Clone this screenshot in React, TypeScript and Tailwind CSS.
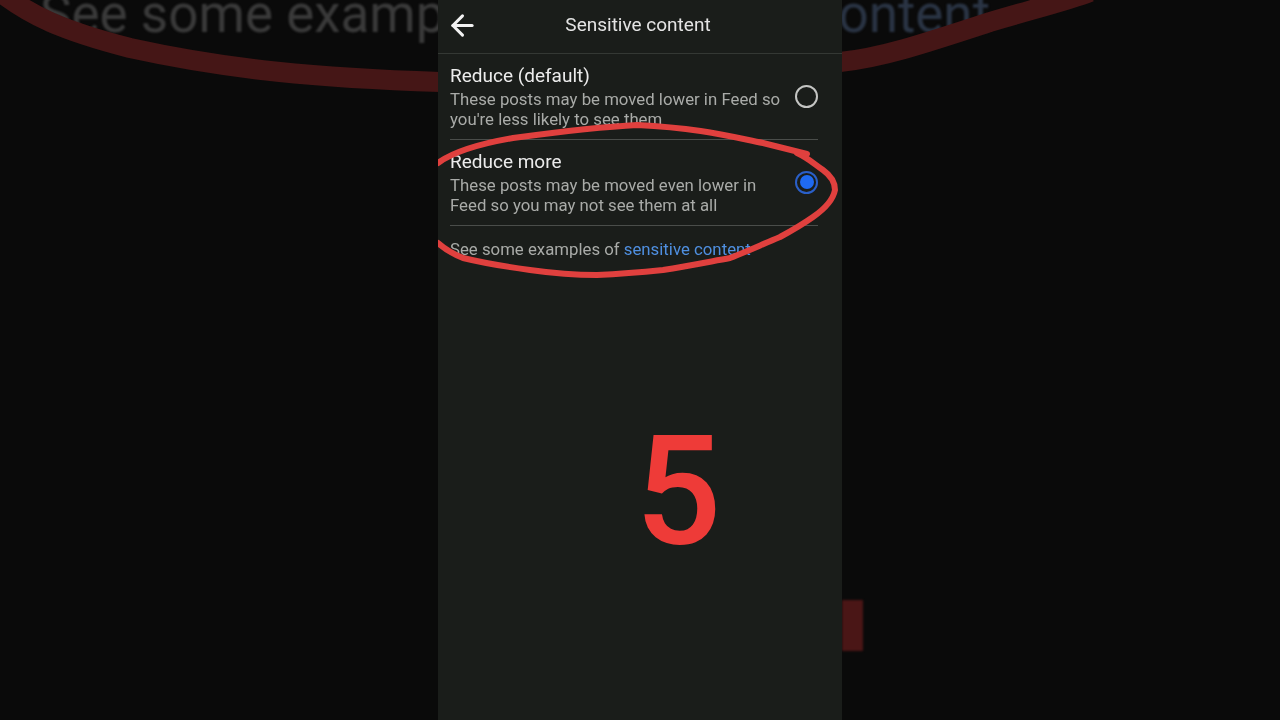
import { ArrowLeft } from "lucide-react";

function Option({ title, lines, selected }: { title: string; lines: string[]; selected?: boolean }) {
  return (
    <div className="flex items-center justify-between h-[86px] border-b border-[#4a4d4a] pb-[1px]">
      <div>
        <div className="text-[19px] leading-[24px] pb-[1px] text-[#ececec]">{title}</div>
        <div className="text-[16.8px] leading-[20px] text-[#a9aba8]">
          {lines.map((l) => (
            <div key={l}>{l}</div>
          ))}
        </div>
      </div>
      {selected ? (
        <div className="w-[23px] h-[23px] rounded-full border-2 border-[#2a5fc8] flex items-center justify-center">
          <div className="w-[14px] h-[14px] rounded-full bg-[#1f6af0]" />
        </div>
      ) : (
        <div className="w-[23px] h-[23px] rounded-full border-2 border-[#c4c5c3]" />
      )}
    </div>
  );
}

export default function App() {
  return (
    <div className="relative h-screen overflow-hidden bg-[#0a0a0a] flex justify-center font-['Roboto',sans-serif]">
      {/* blurred copy of the video behind the phone */}
      <div className="absolute left-[40px] top-[-16px] whitespace-nowrap text-[53px] leading-[60px] text-[#3a3a3a] blur-[1px]">
        See some examples of <span className="text-[#2a3444]">sensitive content</span>
      </div>
      <svg className="absolute inset-0" width="1280" height="720" fill="none">
        <path d="M0 -8 C30 15 60 30 130 48 C230 70 320 78 440 82" stroke="#451616" strokeWidth="20" />
        <path d="M840 62 C880 58 920 45 990 22 C1030 10 1070 0 1090 -8" stroke="#451616" strokeWidth="20" />
      </svg>
      <div className="absolute left-[842px] top-[600px] w-[21px] h-[51px] bg-[#4a1616] blur-[1px]" />

      <div className="relative w-[404px] h-full bg-[#1a1d1a] flex flex-col">
        <div className="relative flex items-center justify-center h-[54px] border-b border-[#343834] shrink-0 pb-[3px] blur-[0.3px]">
          <ArrowLeft className="absolute left-[8px] top-[9px] text-[#f2f2f2]" size={33} strokeWidth={2.2} />
          <span className="text-[19px] text-[#e4e4e4] ml-[-4px]">Sensitive content</span>
        </div>

        <div className="pl-[12px] pr-[24px] blur-[0.3px]">
          <Option
            title="Reduce (default)"
            lines={["These posts may be moved lower in Feed so", "you're less likely to see them"]}
          />
          <Option
            title="Reduce more"
            lines={["These posts may be moved even lower in", "Feed so you may not see them at all"]}
            selected
          />
          <div className="pt-[12px] text-[16.8px] leading-[22px] text-[#a9aba8]">
            See some examples of <span className="text-[#4f8fe0]">sensitive content</span>
          </div>
        </div>

        <div className="pl-[197px] pt-[137px] text-[152px] leading-[190px] font-medium text-[#ee3b38]">5</div>

        {/* hand drawn red circle */}
        <svg className="absolute inset-0 pointer-events-none" width="404" height="720" fill="none">
          <path
            d="M369 154 L325 143 C290 136 260 128 199 125 C160 127 120 132 75 138 C40 144 15 152 0 163"
            stroke="#e0403e"
            strokeWidth="6"
            strokeLinecap="round"
          />
          <path
            d="M0 243 C8 250 15 254 25 258 C50 264 70 267 92 270 C120 274 140 275 159 275 C180 274 205 272 225 270 C250 266 270 262 292 258 C310 251 325 244 342 237 C355 230 365 224 375 217 C388 208 395 200 397 190 C397 182 392 175 385 170 C375 163 370 158 359 153"
            stroke="#e0403e"
            strokeWidth="6"
            strokeLinecap="round"
          />
        </svg>
      </div>
    </div>
  );
}
